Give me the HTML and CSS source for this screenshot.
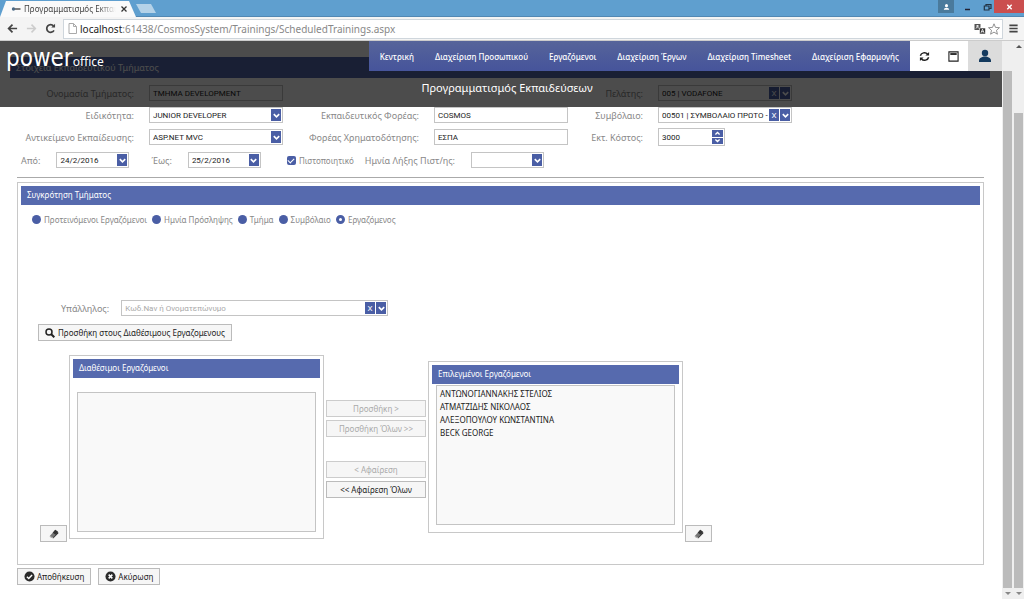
FILE: index.html
```html
<!DOCTYPE html>
<html lang="el">
<head>
<meta charset="utf-8">
<title>Προγραμματισμός Εκπαιδεύσεων</title>
<link rel="stylesheet" href="styles.css">
</head>
<body>
<svg class="defs" aria-hidden="true">
  <symbol id="chev" viewBox="0 0 10 10"><path d="M2 3.5 5 6.5 8 3.5" fill="none" stroke="#fff" stroke-width="1.8"/></symbol>
  <symbol id="eraser" viewBox="0 0 12 12"><path d="M7.500 1 11 3.500 5 10.500 1 8.500Z" fill="#777"/><path d="M11 3.500v2L5 11.500v-1.500Z" fill="#333"/><path d="M7.500 1 11 3.500 8 7 4.500 4.500Z" fill="#333"/><path d="M1 8.500 5 10.500v1L1 9.500Z" fill="#999"/></symbol>
</svg>
<div class="window">
  <div class="tabstrip">
    <div class="tab">
      <svg class="favicon" viewBox="0 0 10 8"><circle cx="2.500" cy="4" r="1.700" fill="#4b6a86"/><path d="M4 4h5.500" stroke="#555" stroke-width="1.500"/></svg>
      <span class="tab-title">Προγραμματισμός Εκπαιδεύσεων</span>
      <button class="tab-close" aria-label="Κλείσιμο καρτέλας"><svg viewBox="0 0 8 8"><path d="M1.500 1.500l5 5m0-5l-5 5" stroke="#333" stroke-width="1.300"/></svg></button>
    </div>
    <button class="new-tab" aria-label="Νέα καρτέλα"></button>
    <div class="win-buttons">
      <button class="win-user" aria-label="Χρήστης"><svg viewBox="0 0 10 8"><circle cx="5" cy="2.500" r="1.700" fill="#fff"/><path d="M2 7c0-3 6-3 6 0z" fill="#fff"/></svg></button>
      <button class="win-min" aria-label="Ελαχιστοποίηση"><svg viewBox="0 0 8 8"><path d="M1.500 6.500h5" stroke="#223" stroke-width="1.500"/></svg></button>
      <button class="win-max" aria-label="Επαναφορά"><svg viewBox="0 0 8 8"><path d="M2.500 2.500v-1h5v4h-1.500M.8 3h4.700v4H.8z" fill="none" stroke="#234" stroke-width="1.200"/></svg></button>
      <button class="win-close" aria-label="Κλείσιμο"><svg viewBox="0 0 8 8"><path d="M1.800 1.800l4.400 4.400m0-4.400l-4.400 4.400" stroke="#fff" stroke-width="1.400"/></svg></button>
    </div>
  </div>
  <div class="toolbar">
    <button aria-label="Πίσω"><svg viewBox="0 0 12 12"><path d="M11 6H2M6 1.800 1.800 6 6 10.200" fill="none" stroke="#444" stroke-width="1.900"/></svg></button>
    <button aria-label="Εμπρός"><svg viewBox="0 0 12 12"><path d="M1 6h9M6 1.800 10.200 6 6 10.200" fill="none" stroke="#ccc" stroke-width="1.700"/></svg></button>
    <button aria-label="Ανανέωση"><svg viewBox="0 0 12 12"><path d="M9.800 8A4.200 4.200 0 1 1 9.300 3.200" fill="none" stroke="#444" stroke-width="1.900"/><path d="M11 .8V5H6.800z" fill="#444"/></svg></button>
    <div class="address">
      <svg class="doc" viewBox="0 0 9 11"><path d="M1 .5h4.500L8.500 3.500v7H1zM5.500.5v3h3" fill="#fff" stroke="#aaa"/></svg>
      <span><b>localhost</b>:61438/CosmosSystem/Trainings/ScheduledTrainings.aspx</span>
      <svg class="translate" viewBox="0 0 12 12"><path d="M.5 1h6v6h-6z" fill="#555"/><path d="M2 3h3M3.500 2v1.500L2 5.500M3.500 4l1.500 1.500" stroke="#fff" stroke-width=".8" fill="none"/><path d="M5.500 5h6v6h-6z" fill="#333" stroke="#fff" stroke-width=".6"/><path d="M7 9.800 8.500 6.200 10 9.800M7.500 8.700h2" fill="none" stroke="#fff" stroke-width=".8"/></svg>
      <svg class="star" viewBox="0 0 12 12"><path d="M6 .8 7.500 4.400l4 .3L8.500 7.300l.9 3.900L6 9.100l-3.400 2.100.9-3.900L.5 4.700l4-.3z" fill="#fff" stroke="#777" stroke-width=".8"/></svg>
    </div>
    <button aria-label="Μενού"><svg viewBox="0 0 12 12"><path d="M1.500 2.500h9M1.500 6h9M1.500 9.500h9" stroke="#444" stroke-width="1.900"/></svg></button>
  </div>
  <div class="viewport">
    <div class="page">
      <header class="masthead">
        <div class="masthead-row">
          <div class="logo"><span class="logo-big">power</span><span class="logo-small">office</span></div>
          <nav class="nav"><a href="#">Κεντρική</a><a href="#">Διαχείριση Προσωπικού</a><a href="#">Εργαζόμενοι</a><a href="#">Διαχείριση Έργων</a><a href="#">Διαχείριση Timesheet</a><a href="#">Διαχείριση Εφαρμογής</a></nav>
          <button class="tool" aria-label="Ανανέωση σελίδας"><svg viewBox="0 0 12 12"><path d="M1.500 5.200C2.300 1.800 7 .8 9.300 3.300M10.500 6.800C9.700 10.200 5 11.200 2.700 8.700" fill="none" stroke="#222" stroke-width="1.600"/><path d="M11 1v4H7zM1 11V7h4z" fill="#222"/></svg></button>
          <button class="tool" aria-label="Παράθυρο"><svg viewBox="0 0 12 12"><path d="M1 1h10v10H1z" fill="none" stroke="#222" stroke-width="1.200"/><path d="M2.500 3.300h7" stroke="#222" stroke-width="2"/></svg></button>
          <button class="tool user" aria-label="Λογαριασμός"><svg viewBox="0 0 14 14"><circle cx="7" cy="4" r="3.200" fill="#143a5e"/><path d="M1 13V11.500C1 9 3 8.500 5.500 7.500h3C11 8.500 13 9 13 11.500V13z" fill="#143a5e"/></svg></button>
        </div>
        <h1>Προγραμματισμός Εκπαιδεύσεων</h1>
      </header>
      <main class="content">
        <h2 class="bar bar-top">Στοιχεία Εκπαιδευτικού Τμήματος</h2>
        <form class="form">
          <div class="grid">
            <label for="name">Ονομασία Τμήματος:</label>
            <div class="field"><input id="name" value="ΤΜΗΜΑ DEVELOPMENT"></div>
            <label for="client" class="third">Πελάτης:</label>
            <div class="field"><input id="client" value="005 | VODAFONE"><button type="button" class="sq">X</button><button type="button" class="sq" aria-label="Άνοιγμα"><svg><use href="#chev"/></svg></button></div>
            <label for="spec">Ειδικότητα:</label>
            <div class="field"><select id="spec"><option>JUNIOR DEVELOPER</option></select><span class="sq"><svg><use href="#chev"/></svg></span></div>
            <label for="body">Εκπαιδευτικός Φορέας:</label>
            <div class="field"><input id="body" value="COSMOS"></div>
            <label for="contract">Συμβόλαιο:</label>
            <div class="field"><input id="contract" value="00501 | ΣΥΜΒΟΛΑΙΟ ΠΡΩΤΟ -"><button type="button" class="sq">X</button><button type="button" class="sq" aria-label="Άνοιγμα"><svg><use href="#chev"/></svg></button></div>
            <label for="subject">Αντικείμενο Εκπαίδευσης:</label>
            <div class="field"><select id="subject"><option>ASP.NET MVC</option></select><span class="sq"><svg><use href="#chev"/></svg></span></div>
            <label for="fund">Φορέας Χρηματοδότησης:</label>
            <div class="field"><input id="fund" value="ΕΣΠΑ"></div>
            <label for="cost">Εκτ. Κόστος:</label>
            <div class="field spin"><input id="cost" value="3000"><span class="steps"><button type="button" aria-label="Αύξηση"><svg class="flip"><use href="#chev"/></svg></button><button type="button" aria-label="Μείωση"><svg><use href="#chev"/></svg></button></span></div>
          </div>
          <div class="dates">
            <label for="from">Από:</label>
            <div class="field date"><input id="from" value="24/2/2016"><button type="button" class="sq" aria-label="Ημερολόγιο"><svg><use href="#chev"/></svg></button></div>
            <label for="to" class="to">Έως:</label>
            <div class="field date"><input id="to" value="25/2/2016"><button type="button" class="sq" aria-label="Ημερολόγιο"><svg><use href="#chev"/></svg></button></div>
            <label class="check"><input type="checkbox" checked>Πιστοποιητικό</label>
            <label for="expiry">Ημνία Λήξης Πιστ/ης:</label>
            <div class="field date"><input id="expiry"><button type="button" class="sq" aria-label="Ημερολόγιο"><svg><use href="#chev"/></svg></button></div>
          </div>
          <hr>
          <section class="box group">
            <h2 class="bar">Συγκρότηση Τμήματος</h2>
            <div class="radios">
              <label><input type="radio" name="by">Προτεινόμενοι Εργαζόμενοι</label>
              <label><input type="radio" name="by">Ημνία Πρόσληψης</label>
              <label><input type="radio" name="by">Τμήμα</label>
              <label><input type="radio" name="by">Συμβόλαιο</label>
              <label><input type="radio" name="by" checked>Εργαζόμενος</label>
            </div>
            <div class="employee">
              <label for="emp">Υπάλληλος:</label>
              <div class="field"><input id="emp" placeholder="Κωδ.Nav ή Ονοματεπώνυμο"><button type="button" class="sq">X</button><button type="button" class="sq" aria-label="Άνοιγμα"><svg><use href="#chev"/></svg></button></div>
            </div>
            <button type="button" class="btn search"><svg viewBox="0 0 10 10"><circle cx="4" cy="4" r="3" fill="none" stroke="#222" stroke-width="1.500"/><path d="M6 6l3.300 3.300" stroke="#222" stroke-width="2"/></svg>Προσθήκη στους Διαθέσιμους Εργαζομενους</button>
            <div class="lists">
              <button type="button" class="btn erase" aria-label="Καθαρισμός διαθέσιμων"><svg><use href="#eraser"/></svg></button>
              <section class="box panel">
                <h3 class="bar">Διαθέσιμοι Εργαζόμενοι</h3>
                <ul class="list spaced"></ul>
              </section>
              <div class="moves">
                <button type="button" class="btn" disabled>Προσθήκη &gt;</button>
                <button type="button" class="btn" disabled>Προσθήκη Όλων &gt;&gt;</button>
                <button type="button" class="btn apart" disabled>&lt; Αφαίρεση</button>
                <button type="button" class="btn">&lt;&lt; Αφαίρεση Όλων</button>
              </div>
              <section class="box panel lower">
                <h3 class="bar">Επιλεγμένοι Εργαζόμενοι</h3>
                <ul class="list"><li>ΑΝΤΩΝΟΓΙΑΝΝΑΚΗΣ ΣΤΕΛΙΟΣ</li><li>ΑΤΜΑΤΖΙΔΗΣ ΝΙΚΟΛΑΟΣ</li><li>ΑΛΕΞΟΠΟΥΛΟΥ ΚΩΝΣΤΑΝΤΙΝΑ</li><li>BECK GEORGE</li></ul>
              </section>
              <button type="button" class="btn erase" aria-label="Καθαρισμός επιλεγμένων"><svg><use href="#eraser"/></svg></button>
            </div>
          </section>
          <div class="actions">
            <button type="button" class="btn"><svg viewBox="0 0 12 12"><circle cx="6" cy="6" r="5.500" fill="#2b2b2b"/><path d="M3.200 6.200l2 2 3.600-3.900" fill="none" stroke="#fff" stroke-width="1.600"/></svg>Αποθήκευση</button>
            <button type="button" class="btn"><svg viewBox="0 0 12 12"><circle cx="6" cy="6" r="5.500" fill="#2b2b2b"/><path d="M4 4l4 4m0-4l-4 4" stroke="#fff" stroke-width="1.700"/></svg>Ακύρωση</button>
          </div>
        </form>
      </main>
    </div>
    <div class="scroll inner"><span class="thumb"></span><i class="down"></i></div>
    <div class="scroll outer"><i class="up"></i><span class="thumb"></span><i class="down"></i></div>
  </div>
</div>
</body>
</html>
```
FILE: styles.css
```css
* { box-sizing: border-box; }
body { margin: 0; font-family: "Noto Sans", "Open Sans", sans-serif; font-size: 8px; color: #222; background: #fff; }
button, input, select { font: inherit; color: inherit; margin: 0; padding: 0; border: 0; background: none; border-radius: 0; outline: 0; }
button { display: flex; align-items: center; justify-content: center; }
h1, h2, h3, ul { margin: 0; padding: 0; font-weight: 400; list-style: none; }
svg { display: block; flex: none; }
.defs { position: absolute; width: 0; height: 0; }
.window { display: flex; flex-direction: column; height: 100vh; overflow: hidden; }

.tabstrip { display: flex; flex: none; height: 17px; background: #5f9fcf; border-bottom: 1px solid #5288b3; }
.tab { display: flex; align-items: center; width: 136px; height: 17px; padding: 0 4px 0 11px; background: #fafafa; clip-path: polygon(0 100%, 6px 1px, 129px 1px, 100% 100%); }
.favicon { width: 10px; height: 8px; margin-right: 3px; }
.tab-title { flex: 1; overflow: hidden; white-space: nowrap; color: #444; -webkit-mask-image: linear-gradient(90deg, #000 80%, transparent); mask-image: linear-gradient(90deg, #000 80%, transparent); }
.tab-close { width: 16px; }
.tab-close svg { width: 8px; height: 8px; }
.new-tab { width: 20px; height: 9px; margin-top: 4px; background: #b4d2e8; clip-path: polygon(0 0, 15px 0, 100% 100%, 5px 100%); }
.win-buttons { display: flex; margin-left: auto; height: 13px; }
.win-buttons svg { width: 9px; height: 8px; }
.win-user { width: 16px; background: #4a7a9c; }
.win-min { width: 26px; }
.win-max { width: 14px; }
.win-close { width: 30px; background: #cb4e4e; }

.toolbar { display: flex; flex: none; align-items: center; height: 24px; padding: 0 1px 0 3px; background: #f4f4f4; border-bottom: 1px solid #ccc; }
.toolbar button { width: 19px; height: 20px; }
.toolbar button svg { width: 11px; height: 11px; }
.address { display: flex; flex: 1; align-items: center; height: 20px; margin: 0 1px 0 3px; padding: 0 2px 0 4px; background: #fff; border: 1px solid #cfd6dc; font-size: 10px; line-height: 14px; color: #888; }
.address b { font-weight: 400; color: #222; }
.doc { width: 9px; height: 11px; margin-right: 3px; }
.translate { width: 12px; height: 12px; margin-left: auto; }
.star { width: 12px; height: 12px; margin-left: 2px; }

.viewport { display: flex; flex: 1; min-height: 0; }
.page { position: relative; flex: 1; min-width: 0; overflow: hidden; }
.masthead { position: absolute; inset: 0 0 auto 0; z-index: 2; height: 66px; background: rgba(0, 0, 0, .7); color: #fff; }
.masthead-row { display: flex; height: 30px; }
.logo { display: flex; flex: 1; align-items: baseline; padding-left: 6px; line-height: 34px; white-space: nowrap; }
.logo-big { font-family: "DejaVu Sans Condensed", "Liberation Sans", sans-serif; font-size: 24px; }
.logo-small { font-size: 12px; }
.nav { display: flex; align-items: center; gap: 21px; padding: 0 11px; background: linear-gradient(#56649a, #46549b); font-weight: 500; white-space: nowrap; }
.nav a { color: #fff; text-decoration: none; }
.tool { width: 29px; background: #fff; }
.tool svg { width: 11px; height: 11px; }
.tool.user { width: 34px; background: #dcdcdc; }
.tool.user svg { width: 14px; height: 14px; }
.masthead h1 { padding: 8px 0 0 12px; font-size: 11px; line-height: 17px; text-align: center; }

.content { padding: 16px 12px 0 10px; }
.bar { height: 19px; padding-left: 6px; background: #566aae; color: #fff; font-size: 8px; line-height: 18px; }
.bar-top { height: 21px; line-height: 21px; font-size: 9px; }
.form { padding: 4px 6px 0 7px; }
.grid { display: grid; grid-template-columns: 117px 134px 121px 134px 60px 134px; column-gap: 15px; grid-auto-rows: 22px; align-items: center; }
.grid > label, .dates > label, .employee > label { color: #888; font-size: 9px; text-align: right; white-space: nowrap; }
.grid > .third { grid-column: 5; }
.field { display: flex; align-items: stretch; height: 16px; padding: 1px; border: 1px solid #c4c4c4; background: #fff; font-family: Roboto, "Noto Sans", sans-serif; font-size: 8px; }
.field input, .field select { flex: 1; min-width: 0; padding-left: 2px; appearance: none; }
.sq { display: flex; align-items: center; justify-content: center; width: 10px; margin-left: 1px; background: #4a5ea5; color: #fff; }
.sq svg, .steps svg { width: 9px; height: 9px; }
.spin { width: 67px; height: 18px; }
.steps { display: flex; flex-direction: column; gap: 1px; width: 11px; }
.steps button { flex: 1; min-height: 0; overflow: hidden; background: #4a5ea5; }
.steps svg { height: 7px; }
.flip { transform: rotate(180deg); }
.dates { display: flex; align-items: center; height: 24px; padding-left: 4px; }
.date { width: 73px; margin-left: 16px; }
.dates .to { margin-left: 22px; }
.dates > .check { display: flex; align-items: center; gap: 3px; margin: 0 11px 0 26px; font-size: 8px; }
.check input { appearance: none; width: 9px; height: 9px; border-radius: 2px; background: #4a5ea5; display: grid; place-items: center; }
.check input:checked::after { content: ""; width: 5px; height: 3px; margin-top: -1px; border: solid #fff; border-width: 0 0 1px 1px; transform: rotate(-45deg); }
hr { margin: 5px 0 4px; border: 0; border-top: 1px solid #aaa; }

.box { border: 1px solid #c8c8c8; background: #fff; padding: 3px; }
.group { height: 383px; }
.radios { display: flex; gap: 5px; align-items: center; height: 28px; padding-left: 11px; color: #888; }
.radios label { display: flex; align-items: center; gap: 3px; white-space: nowrap; }
.radios input { appearance: none; width: 9px; height: 9px; border-radius: 50%; background: #4a5ea5; }
.radios input:checked { background: #fff; border: 3px solid #4a5ea5; }
.employee { display: flex; align-items: center; gap: 12px; margin-top: 67px; padding-left: 40px; }
.employee .field { width: 267px; }
.employee input::placeholder { color: #aaa; opacity: 1; }
.btn { gap: 3px; height: 17px; padding: 0 6px; border: 1px solid #bbb; background: #f6f6f6; white-space: nowrap; }
.btn svg { width: 10px; height: 10px; }
.btn:disabled { color: #aaa; border-color: #ccc; }
.search { margin: 8px 0 14px 17px; }
.lists { display: flex; align-items: flex-start; gap: 2px; padding-left: 19px; }
.erase { align-self: flex-end; width: 27px; margin-top: 170px; }
.panel { width: 255px; }
.lower { margin-top: 6px; }
.list { height: 140px; margin: 1px 4px 4px; padding: 1px 3px; border: 1px solid #c4c4c4; background: #f9f9f9; line-height: 13px; }
.list.spaced { margin: 14px 4px 3px; }
.moves { display: flex; flex-direction: column; gap: 3px; width: 100px; padding-top: 45px; }
.apart { margin-top: 21px; }
.actions { display: flex; gap: 7px; padding-top: 3px; }
.actions svg { width: 11px; height: 11px; }
.actions .btn { gap: 2px; }

.scroll { display: flex; flex-direction: column; align-items: center; width: 11px; background: #efefef; }
.thumb { flex: 1; width: 9px; background: #bbb; }
.inner .thumb { margin-top: 30px; }
.up, .down { border: 3px solid transparent; }
.up { margin-top: 4px; border-bottom-color: #555; border-top-width: 0; }
.up + .thumb { margin-top: 65px; }
.down { margin: 4px 0; border-top-color: #888; border-bottom-width: 0; }
```
